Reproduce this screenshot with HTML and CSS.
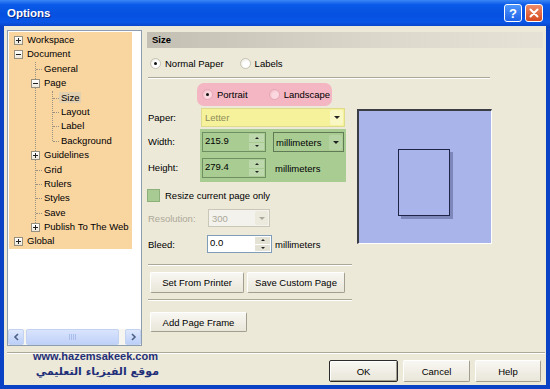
FILE: index.html
```html
<!DOCTYPE html>
<html lang="en">
<head>
    <meta charset="UTF-8">
    <title>Options</title>
    <link rel="stylesheet" href="styles.css">
</head>
<body>

<div class="window">
    <div class="titlebar">
        <span class="title">Options</span>
        <div class="caption-btns">
            <span class="cap-btn help">?</span>
            <span class="cap-btn close">
                <svg width="10" height="10" viewBox="0 0 10 10"><path d="M1.5 1.5 L8.5 8.5 M8.5 1.5 L1.5 8.5" stroke="#fff" stroke-width="2" stroke-linecap="round"/></svg>
            </span>
        </div>
    </div>

    <div class="client">
        <div class="main">
            <!-- category tree -->
            <div class="tree-box">
                <ul class="tree">
                    <li><div class="row"><span class="box plus"></span>Workspace</div></li>
                    <li><div class="row"><span class="box"></span>Document</div>
                        <ul>
                            <li><div class="row leaf">General</div></li>
                            <li><div class="row"><span class="box"></span>Page</div>
                                <ul>
                                    <li><div class="row leaf"><span class="sel">Size</span></div></li>
                                    <li><div class="row leaf">Layout</div></li>
                                    <li><div class="row leaf">Label</div></li>
                                    <li><div class="row leaf">Background</div></li>
                                </ul>
                            </li>
                            <li><div class="row"><span class="box plus"></span>Guidelines</div></li>
                            <li><div class="row leaf">Grid</div></li>
                            <li><div class="row leaf">Rulers</div></li>
                            <li><div class="row leaf">Styles</div></li>
                            <li><div class="row leaf">Save</div></li>
                            <li><div class="row"><span class="box plus"></span>Publish To The Web</div></li>
                        </ul>
                    </li>
                    <li><div class="row"><span class="box plus"></span>Global</div></li>
                </ul>

                <div class="hscroll">
                    <span class="sb-btn">
                        <svg width="7" height="8" viewBox="0 0 7 8"><path d="M5 1 L2 4 L5 7" fill="none" stroke="#4d6185" stroke-width="1.6"/></svg>
                    </span>
                    <span class="sb-thumb"><span class="grip"></span></span>
                    <span class="sb-btn right">
                        <svg width="7" height="8" viewBox="0 0 7 8"><path d="M2 1 L5 4 L2 7" fill="none" stroke="#4d6185" stroke-width="1.6"/></svg>
                    </span>
                </div>
            </div>

            <!-- size page -->
            <div class="pane">
                <div class="pane-head">Size</div>

                <div class="radio-row">
                    <span class="radio checked"></span><span class="rlabel">Normal Paper</span>
                    <span class="radio gap"></span><span class="rlabel">Labels</span>
                </div>

                <div class="sep wide"></div>

                <div class="orient">
                    <span class="radio pinkish checked"></span><span class="rlabel">Portrait</span>
                    <span class="radio pinkish gap2"></span><span class="rlabel">Landscape</span>
                </div>

                <div class="cols">
                    <div class="fields">
                        <div class="field-row">
                            <span class="lbl paper-lbl">Paper:</span>
                            <div class="combo yellow">
                                <span class="combo-text">Letter</span>
                                <span class="drop"><span class="arrow"></span></span>
                            </div>
                        </div>

                        <div class="dims">
                            <div class="dim-labels">
                                <span>Width:</span>
                                <span>Height:</span>
                            </div>
                            <div class="green">
                                <div class="dim-row">
                                    <div class="num">
                                        <span class="num-text">215.9</span>
                                        <span class="spin"><span class="up"></span><span class="down"></span></span>
                                    </div>
                                    <div class="combo units">
                                        <span class="combo-text">millimeters</span>
                                        <span class="drop"><span class="arrow"></span></span>
                                    </div>
                                </div>
                                <div class="dim-row">
                                    <div class="num">
                                        <span class="num-text">279.4</span>
                                        <span class="spin"><span class="up"></span><span class="down"></span></span>
                                    </div>
                                    <span class="unit-text">millimeters</span>
                                </div>
                            </div>
                        </div>

                        <div class="check-row">
                            <span class="checkbox"></span><span>Resize current page only</span>
                        </div>

                        <div class="field-row res-row">
                            <span class="lbl res-lbl disabled">Resolution:</span>
                            <div class="combo res">
                                <span class="combo-text">300</span>
                                <span class="drop"><span class="arrow"></span></span>
                            </div>
                        </div>

                        <div class="field-row bleed-row">
                            <span class="lbl bleed-lbl">Bleed:</span>
                            <div class="num white">
                                <span class="num-text">0.0</span>
                                <span class="spin"><span class="up"></span><span class="down"></span></span>
                            </div>
                            <span class="unit-text short">millimeters</span>
                        </div>

                        <div class="sep narrow s1"></div>

                        <div class="btn-row">
                            <span class="btn printer">Set From Printer</span>
                            <span class="btn custom">Save Custom Page</span>
                        </div>

                        <div class="sep narrow s2"></div>

                        <span class="btn frame">Add Page Frame</span>
                    </div>

                    <div class="preview">
                        <div class="page"></div>
                    </div>
                </div>
            </div>
        </div>

        <div class="footer-sep"></div>

        <div class="footer">
            <div class="watermark">
                <div class="wm-url">www.hazemsakeek.com</div>
                <div class="wm-ar" dir="rtl">موقع الفيزياء التعليمي</div>
            </div>
            <div class="dlg-btns">
                <span class="btn ok">OK</span>
                <span class="btn cancel">Cancel</span>
                <span class="btn help-btn">Help</span>
            </div>
        </div>
    </div>
</div>

</body>
</html>
```

FILE: styles.css
```css
/* XP style Options dialog */
body {
    margin: 0;
    background: #ece9d8;
    font-family: "Liberation Sans", Arial, sans-serif;
    font-size: 9.5px;
    color: #000;
}

.window {
    width: 550px;
    height: 389px;
    box-sizing: border-box;
    background: #0a42c6;
    padding: 0 4px 4px;
    display: flex;
    flex-direction: column;
}

/* title bar */
.titlebar {
    height: 26px;
    margin: 0 -4px;
    padding: 0 7px 0 7px;
    display: flex;
    align-items: center;
    background: linear-gradient(#3a86f6 0%, #0b5ae8 18%, #0550e0 55%, #0a56e6 85%, #0a46cc 100%);
}

.title {
    color: #fff;
    font-weight: bold;
    font-size: 11.5px;
    text-shadow: 1px 1px 0 #0b2a8a;
}

.caption-btns {
    margin-left: auto;
    display: flex;
    gap: 3px;
}

.cap-btn {
    width: 18px;
    height: 18px;
    box-sizing: border-box;
    border: 1px solid #fff;
    border-radius: 3px;
    display: flex;
    align-items: center;
    justify-content: center;
    color: #fff;
    font-weight: bold;
    font-size: 13px;
}

.cap-btn.help {
    background: linear-gradient(#4f96fb, #1f62e8);
}

.cap-btn.close {
    background: linear-gradient(#ee8c68, #d6491f);
}

/* client area */
.client {
    flex: 1;
    background: #ece9d8;
    display: flex;
    flex-direction: column;
}

.main {
    height: 320px;
    box-sizing: border-box;
    padding: 4px 3px 0 3px;
    display: flex;
    gap: 5px;
}

/* tree */
.tree-box {
    width: 135px;
    box-sizing: border-box;
    border: 1px solid #8c9db0;
    background: #fff;
    display: flex;
    flex-direction: column;
}

.tree, .tree ul {
    list-style: none;
    margin: 0;
    padding: 0;
}

.tree {
    margin: 1px 0 0 1px;
    width: 123px;
    padding-top: 1px;
    background: #f9d5a0;
}

.tree ul {
    padding-left: 17px;
    position: relative;
}

.tree ul::before {
    content: "";
    position: absolute;
    left: 26px;
    top: 0;
    bottom: 7px;
    border-left: 1px dotted #9c9282;
}

.row {
    position: relative;
    height: 14.4px;
    line-height: 14.4px;
    padding-left: 18px;
    white-space: nowrap;
}

.row.leaf::before {
    content: "";
    position: absolute;
    left: 10px;
    top: 7px;
    width: 6px;
    border-top: 1px dotted #9c9282;
}

.box {
    position: absolute;
    z-index: 1;
    left: 5px;
    top: 3px;
    width: 9px;
    height: 9px;
    box-sizing: border-box;
    border: 1px solid #98907f;
    background: linear-gradient(#fff, #ece8dc);
}

.box::before {
    content: "";
    position: absolute;
    left: 1px;
    top: 3px;
    width: 5px;
    height: 1px;
    background: #222;
}

.box.plus::after {
    content: "";
    position: absolute;
    left: 3px;
    top: 1px;
    width: 1px;
    height: 5px;
    background: #222;
}

.sel {
    background: #e2d0b2;
    margin-left: -2px;
    padding: 0 2px;
}

/* scrollbar */
.hscroll {
    margin-top: auto;
    height: 16px;
    display: flex;
    background: #f6f5f0;
}

.sb-btn {
    width: 16px;
    height: 16px;
    box-sizing: border-box;
    border: 1px solid #c4d2f2;
    border-radius: 2px;
    background: linear-gradient(#dfe8fd, #bccff8);
    display: flex;
    align-items: center;
    justify-content: center;
}

.sb-btn.right {
    margin-left: auto;
}

.sb-thumb {
    width: 93px;
    margin-left: 2px;
    box-sizing: border-box;
    border: 1px solid #c4d2f2;
    border-radius: 2px;
    background: linear-gradient(#d9e4fd, #c0d1f8);
    display: flex;
    align-items: center;
    justify-content: center;
}

.grip {
    width: 7px;
    height: 6px;
    background: repeating-linear-gradient(to right, #a8bdec 0, #a8bdec 1px, transparent 1px, transparent 2px);
}

/* right pane */
.pane {
    width: 396px;
    display: flex;
    flex-direction: column;
}

.pane-head {
    margin-top: 2px;
    height: 16px;
    line-height: 16px;
    padding-left: 5px;
    font-weight: bold;
    background: linear-gradient(to right, #c3bfb3, #dcd8cc 60%, #e6e2d6);
}

.radio-row {
    margin-top: 6px;
    height: 18px;
    padding-left: 3px;
    display: flex;
    align-items: center;
}

.radio {
    width: 11px;
    height: 11px;
    box-sizing: border-box;
    border-radius: 50%;
    border: 1px solid #c7c3b4;
    background: radial-gradient(circle at 65% 65%, #fff 40%, #e4e1d5);
    position: relative;
    flex: none;
}

.radio.checked::after {
    content: "";
    position: absolute;
    left: 3px;
    top: 3px;
    width: 3px;
    height: 3px;
    border-radius: 50%;
    background: #111;
}

.radio.gap {
    margin-left: 16px;
}

.rlabel {
    margin-left: 4px;
}

.sep {
    height: 0;
    border-top: 1px solid #aca899;
    border-bottom: 1px solid #fff;
}

.sep.wide {
    margin: 5px 0 0 1px;
    width: 342px;
}

.orient {
    margin: 4px 0 0 50px;
    width: 135px;
    height: 23px;
    box-sizing: border-box;
    padding-left: 5px;
    border-radius: 7px;
    background: #f3b6c2;
    display: flex;
    align-items: center;
}

.radio.pinkish {
    border-color: #e6a7b4;
    background: radial-gradient(circle at 65% 65%, #fbd8df 40%, #efb3bf);
}

.radio.gap2 {
    margin-left: 21px;
}

.cols {
    margin-top: 2px;
    display: flex;
}

.fields {
    width: 204px;
    margin-left: 1px;
    display: flex;
    flex-direction: column;
}

.field-row {
    height: 19px;
    display: flex;
    align-items: center;
}

.paper-lbl { width: 53px; }
.res-lbl { width: 60px; }
.bleed-lbl { width: 59px; }

.disabled { color: #aca899; }

.combo {
    height: 19px;
    box-sizing: border-box;
    border: 1px solid #7f9db9;
    display: flex;
    align-items: center;
}

.combo-text {
    padding-left: 3px;
    flex: 1;
}

.drop {
    width: 13px;
    height: 15px;
    margin-right: 1px;
    border-radius: 2px;
    display: flex;
    align-items: center;
    justify-content: center;
}

.arrow {
    width: 0;
    height: 0;
    border-left: 3px solid transparent;
    border-right: 3px solid transparent;
    border-top: 3px solid #222;
}

.combo.yellow {
    width: 144px;
    background: #f5f29b;
    border-color: #dedb8c;
}

.combo.yellow .combo-text { color: #8e8c5a; }
.combo.yellow .drop { background: #f9f7c4; }

.dims {
    margin-top: 2px;
    display: flex;
}

.dim-labels {
    width: 52px;
    padding-top: 3px;
    display: flex;
    flex-direction: column;
    gap: 6px;
}

.dim-labels span {
    height: 20px;
    line-height: 20px;
}

.green {
    width: 146px;
    box-sizing: border-box;
    padding: 3px 2px 4px;
    background: #a9cc93;
    display: flex;
    flex-direction: column;
    gap: 6px;
}

.dim-row {
    height: 20px;
    display: flex;
    align-items: center;
}

.num {
    width: 64px;
    height: 20px;
    box-sizing: border-box;
    border: 1px solid #6f8f62;
    display: flex;
}

.num-text {
    flex: 1;
    padding: 2px 0 0 2px;
}

.spin {
    width: 15px;
    display: flex;
    flex-direction: column;
    gap: 1px;
    padding: 1px 1px 1px 0;
}

.spin span {
    flex: 1;
    background: #bcd8ac;
    display: flex;
    align-items: center;
    justify-content: center;
}

.spin .up::after, .spin .down::after {
    content: "";
    border-left: 2px solid transparent;
    border-right: 2px solid transparent;
}

.spin .up::after { border-bottom: 2px solid #222; }
.spin .down::after { border-top: 2px solid #222; }

.combo.units {
    width: 71px;
    height: 20px;
    margin-left: 7px;
    border-color: #5f7a55;
}

.combo.units .combo-text { padding-left: 2px; }
.combo.units .drop { background: #b6d4a3; }

.unit-text {
    margin-left: 9px;
}

.unit-text.short {
    margin-left: 3px;
}

.check-row {
    margin-top: 6px;
    height: 14px;
    display: flex;
    align-items: center;
}

.checkbox {
    width: 13px;
    height: 13px;
    box-sizing: border-box;
    margin: 0 5px 0 -1px;
    border: 1px solid #8db07a;
    background: #a8cb93;
}

.res-row {
    margin-top: 7px;
    height: 18px;
}

.combo.res {
    width: 62px;
    height: 18px;
    border-color: #cac7b8;
    background: #f3f2ec;
    color: #aca899;
}

.combo.res .drop { background: #ece9dd; height: 14px; }
.combo.res .arrow { border-top-color: #aca899; }

.bleed-row {
    margin-top: 8px;
    height: 18px;
}

.num.white {
    width: 65px;
    height: 18px;
    background: #fff;
    border-color: #7f9db9;
}

.num.white .num-text { padding-top: 1px; }
.num.white .spin span { background: #e4e1d5; }

.sep.narrow {
    width: 204px;
}

.sep.s1 { margin-top: 11px; }
.sep.s2 { margin-top: 6px; }

.btn {
    height: 21px;
    box-sizing: border-box;
    border: 1px solid;
    border-color: #fff #a19d8f #a19d8f #fff;
    border-radius: 2px;
    background: linear-gradient(#f8f7f2, #e9e6d9);
    display: flex;
    align-items: center;
    justify-content: center;
}

.btn-row {
    margin-top: 6px;
    display: flex;
    gap: 3px;
    padding-left: 2px;
}

.btn.printer { width: 94px; }
.btn.custom { width: 98px; }

.btn.frame {
    margin: 11px 0 0 2px;
    width: 97px;
    height: 20px;
}

/* page preview */
.preview {
    margin: 1px 0 0 5px;
    width: 135px;
    height: 135px;
    box-sizing: border-box;
    border-top: 2px solid #3c3c44;
    border-left: 2px solid #3c3c44;
    border-right: 1px solid #fff;
    border-bottom: 1px solid #fff;
    background: #a9b4eb;
    padding: 38px 0 0 39px;
}

.page {
    width: 52px;
    height: 67px;
    box-sizing: border-box;
    border: 1px solid #1e2448;
    box-shadow: 3px 3px 0 #7d87b9;
}

/* footer */
.footer-sep {
    margin: 6px 1px 0 3px;
    border-top: 1px solid #aca899;
    border-bottom: 1px solid #fff;
}

.footer {
    margin-top: 6px;
    display: flex;
    align-items: flex-start;
}

.watermark {
    margin: -12px 0 0 29px;
    width: 126px;
    color: #1f2f78;
    font-weight: bold;
}

.wm-url {
    font-size: 11px;
    height: 16px;
    line-height: 16px;
}

.wm-ar {
    font-family: "DejaVu Sans", sans-serif;
    font-size: 11px;
    height: 16px;
    line-height: 16px;
    text-align: right;
}

.dlg-btns {
    margin: 0 5px 0 auto;
    display: flex;
    gap: 5px;
}

.dlg-btns .btn { height: 22px; }

.btn.ok {
    width: 69px;
    border: 1px solid #2a2a2a;
    box-shadow: inset 1px 1px 0 #fff, inset -1px -1px 0 #a19d8f;
}

.btn.cancel { width: 67px; }
.btn.help-btn { width: 66px; }
```
